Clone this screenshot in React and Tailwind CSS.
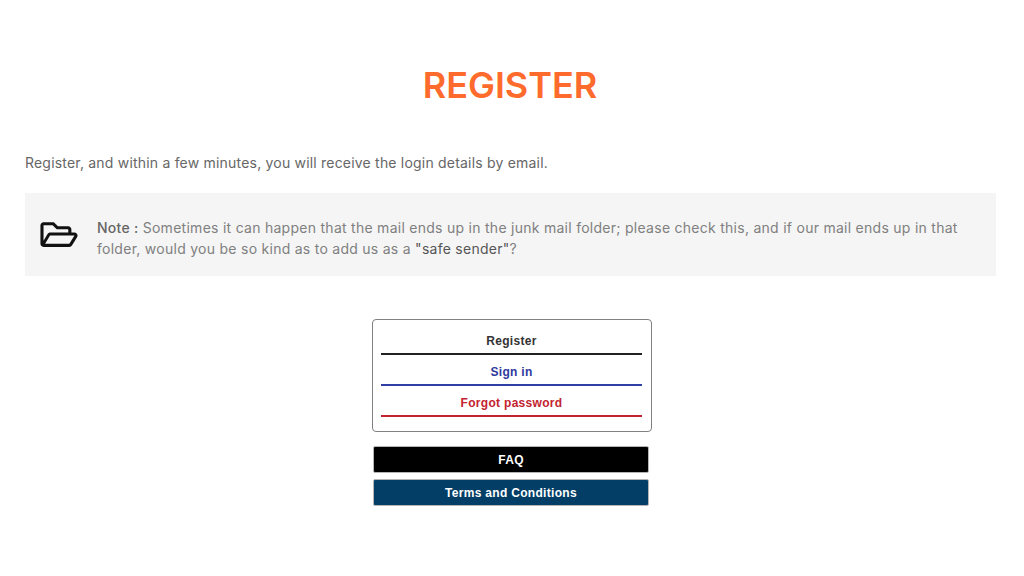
import React from "react";
import { FaRegFolderOpen } from "react-icons/fa";

const links = [
  { label: "Register", text: "text-[#333333]", line: "border-[#222222]" },
  { label: "Sign in", text: "text-[#2f3a9e]", line: "border-[#2f3fa5]" },
  { label: "Forgot password", text: "text-[#c3232f]", line: "border-[#c3232f]" },
];

export default function App() {
  return (
    <div className="min-h-[576px] bg-white px-[25px] pt-[62px] font-['Inter',sans-serif]">
      <h1 className="mr-[4px] text-center text-[36px] leading-[46px] font-semibold text-[#ff6b2c]">REGISTER</h1>

      <p className="mt-[44px] text-[14px] leading-[22px] tracking-[0.2px] text-[#666666]">
        Register, and within a few minutes, you will receive the login details by email.
      </p>

      <div className="mt-[19px] flex h-[83px] w-[971px] items-center bg-[#f5f5f5] pr-[30px] pl-[15px]">
        <FaRegFolderOpen className="h-[33px] w-[38px] shrink-0 text-[#111111]" />
        <p className="ml-[19px] pt-[6px] text-[14px] leading-[21px] tracking-[0.27px] text-[#808080]">
          <span className="font-medium text-[#666666]">Note :</span> Sometimes it can happen that the mail ends up in the junk mail folder; please check this, and if our mail ends up in that folder, would you be so kind as to add us as a <span className="text-[#555555]">"safe sender"</span>?
        </p>
      </div>

      <div className="mx-auto w-[280px] font-['Liberation_Sans',sans-serif]">
        <div className="mt-[43px] flex flex-col rounded-[4px] border border-[#808080] pt-[4px] pr-[9px] pb-[14px] pl-[8px]">
          {links.map((l) => (
            <a key={l.label} className={`h-[31px] border-b-2 pt-[10px] text-center text-[12px] leading-[14px] font-bold tracking-[0.3px] ${l.text} ${l.line}`}>
              {l.label}
            </a>
          ))}
        </div>

        <div className="mt-[14px] ml-[1px] flex w-[276px] flex-col gap-[6px]">
          <button className="h-[27px] rounded-[2px] border border-[#b5b5b5] bg-black text-center text-[12px] font-bold tracking-[0.3px] text-white">FAQ</button>
          <button className="h-[27px] rounded-[2px] border border-[#b5b5b5] bg-[#023e66] text-center text-[12px] font-bold tracking-[0.3px] text-white">Terms and Conditions</button>
        </div>
      </div>
    </div>
  );
}
